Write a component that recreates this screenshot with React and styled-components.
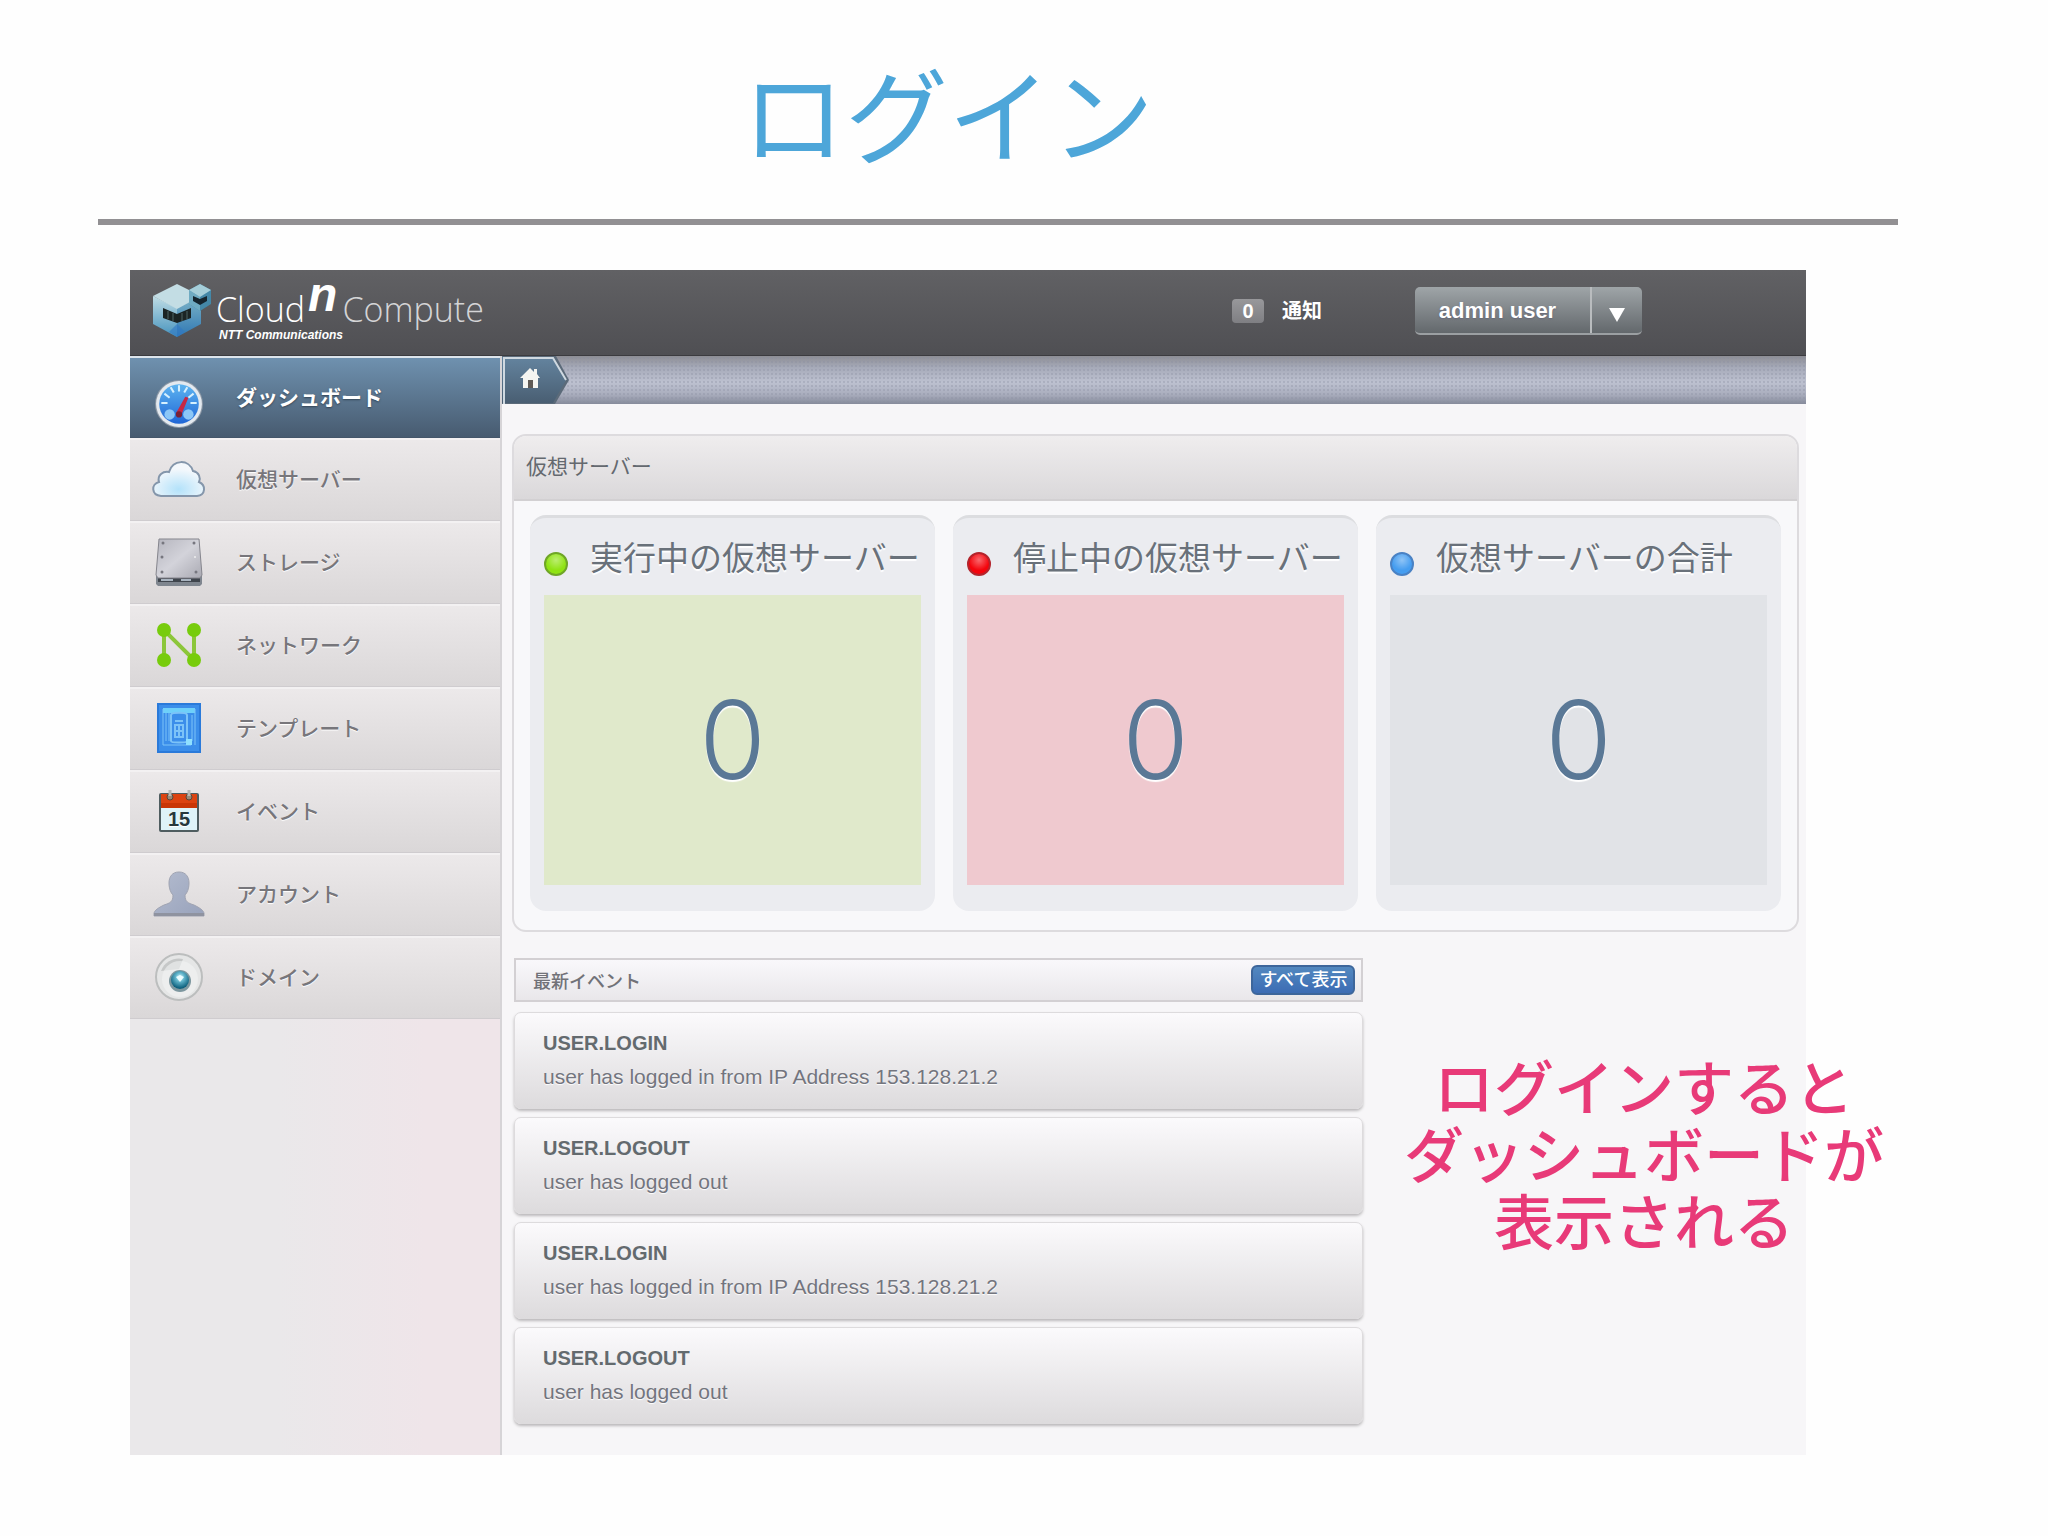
import React from "react";
import styled, { createGlobalStyle, css } from "styled-components";

const sans = `"Liberation Sans", "Noto Sans CJK JP", sans-serif`;
const jp = `"Noto Sans CJK JP", sans-serif`;

const DashboardIcon = () => (
  <svg viewBox="0 0 48 48" width="50" height="50">
    <defs>
      <linearGradient id="dial" x1="0" y1="0" x2="0" y2="1">
        <stop offset="0" stopColor="#5db4f0" />
        <stop offset="1" stopColor="#1f66d6" />
      </linearGradient>
    </defs>
    <circle cx="24" cy="24" r="23" fill="#8b97a5" />
    <circle cx="24" cy="24" r="22" fill="#e3e9ef" />
    <circle cx="24" cy="24" r="19" fill="url(#dial)" />
    <g stroke="#d5f0ff" strokeWidth="2">
      <path d="M7 23h6M10 14l5 4M16 8l3 5M24 6v6M32 8l-3 5M38 14l-5 4M41 23h-6" />
    </g>
    <circle cx="15" cy="34" r="5" fill="#8cc7f7" />
    <circle cx="33" cy="34" r="5" fill="#8cc7f7" />
    <path d="M30 17l3 1-7 17-5-2z" fill="#c72846" />
    <circle cx="24" cy="34" r="3" fill="#7a2034" />
  </svg>
);

const CloudIcon = () => (
  <svg viewBox="0 0 54 38" width="54" height="38">
    <defs>
      <radialGradient id="cloud" cx=".5" cy=".8" r=".6">
        <stop offset="0" stopColor="#b3e2fa" />
        <stop offset="1" stopColor="#f4f8fc" />
      </radialGradient>
    </defs>
    <path
      d="M9 36C-1 35-1 24 7 22C5 15 11 11 17 12C21-1 37-1 41 11C47 12 49 18 47 22C54 25 54 35 45 36Z"
      fill="url(#cloud)"
      stroke="#8496ab"
      strokeWidth="2"
    />
  </svg>
);

const StorageIcon = () => (
  <svg viewBox="0 0 48 50" width="48" height="50">
    <defs>
      <linearGradient id="disk" x1="0" y1="0" x2="1" y2="1">
        <stop offset="0" stopColor="#b5b5be" />
        <stop offset=".5" stopColor="#d3d3da" />
        <stop offset="1" stopColor="#a9a9b2" />
      </linearGradient>
    </defs>
    <path d="M1 39h46v8l-2 2H3l-2-2z" fill="#7f868f" />
    <path d="M3 40h42v5H3z" fill="#3f454d" />
    <path d="M6 43h12M26 43h10" stroke="#a9b4c0" strokeWidth="2" />
    <path d="M4 2h40l3 36-2 3H3l-2-3z" fill="url(#disk)" stroke="#85858d" />
    <g fill="#77777f">
      <circle cx="8" cy="6" r="1.5" />
      <circle cx="39" cy="6" r="1.5" />
      <circle cx="7" cy="20" r="1.5" />
      <circle cx="7" cy="35" r="1.5" />
      <circle cx="41" cy="35" r="1.5" />
    </g>
    <circle cx="40" cy="20" r="1" fill="#eee" />
  </svg>
);

const NetworkIcon = () => (
  <svg viewBox="0 0 46 46" width="46" height="46">
    <path
      d="M8 38V8L38 38V8"
      fill="none"
      stroke="#8cc63a"
      strokeWidth="4"
    />
    <g fill="#77cc0c">
      <circle cx="8" cy="8" r="7" />
      <circle cx="38" cy="8" r="7" />
      <circle cx="8" cy="38" r="7" />
      <circle cx="38" cy="38" r="7" />
    </g>
  </svg>
);

const TemplateIcon = () => (
  <svg viewBox="0 0 44 50" width="44" height="50">
    <path d="M1 1h42v48H1z" fill="#3b8eea" stroke="#2a7ada" strokeWidth="2" />
    <path d="M6 5h32v5H6z" fill="#6ed0fa" />
    <g fill="none" stroke="#7cc3f8">
      <path d="M6 6v36h28M38 6v36M9 10v28M12 10v28M35 12v26" />
      <path d="M14 12c0-3 16-3 16 0v26c0 2-16 2-16 0z" strokeWidth="2" />
      <path d="M18 18h8M18 22h8v12h-8zM22 22v12M18 28h8" strokeWidth="2" />
    </g>
    <path d="M29 36h6v6h-6z" fill="#8fe0ff" />
  </svg>
);

const EventIcon = () => (
  <svg viewBox="0 0 42 44" width="42" height="44">
    <rect x="1" y="4" width="40" height="39" rx="2" fill="#4f5d60" />
    <path d="M3 5h36v15H3z" fill="#dc4310" />
    <path d="M3 19h36v22H3z" fill="#dff3f8" />
    <path d="M3 14h36v5H3z" fill="#c93606" />
    <g fill="#9b8a78" stroke="#57473a">
      <circle cx="12" cy="8" r="3" />
      <circle cx="31" cy="8" r="3" />
    </g>
    <path d="M12 1v6M31 1v6" stroke="#b9b9b4" strokeWidth="3" />
    <text
      x="21"
      y="37"
      textAnchor="middle"
      fontFamily="Liberation Sans, sans-serif"
      fontWeight="700"
      fontSize="20"
      fill="#27373c"
    >
      15
    </text>
  </svg>
);

const AccountIcon = () => (
  <svg viewBox="0 0 52 46" width="52" height="46">
    <defs>
      <linearGradient id="person" x1="0" y1="0" x2="1" y2="1">
        <stop offset="0" stopColor="#b4bccf" />
        <stop offset="1" stopColor="#98a2bb" />
      </linearGradient>
    </defs>
    <path
      d="M26 1c7 0 10 5 10 11s-2 10-4 12c0 7 3 8 9 10 6 3 9 5 10 8v3H1v-3c1-3 4-5 10-8 6-2 9-3 9-10-2-2-4-6-4-12S19 1 26 1z"
      fill="url(#person)"
      stroke="#a0a4b2"
    />
    <path d="M1 42h50v3H1z" fill="#8f93a0" />
  </svg>
);

const DomainIcon = () => (
  <svg viewBox="0 0 50 50" width="50" height="50">
    <defs>
      <radialGradient id="iris" cx=".5" cy=".35" r=".6">
        <stop offset="0" stopColor="#d8f6fc" />
        <stop offset=".4" stopColor="#62b5cb" />
        <stop offset="1" stopColor="#0d5f7c" />
      </radialGradient>
    </defs>
    <circle cx="25" cy="25" r="23" fill="#e5e6e6" stroke="#bcbebe" strokeWidth="2" />
    <path d="M7 19C11 8 22 5 29 7L25 17Z" fill="#c6c8c8" />
    <circle cx="26" cy="27" r="18" fill="#f2f3f3" opacity=".6" />
    <circle cx="26" cy="29" r="11" fill="#7d979f" />
    <circle cx="26" cy="28" r="9" fill="url(#iris)" />
    <path d="M22 25l4 5 4-5-4-2z" fill="#eafcff" />
  </svg>
);

const LogoIcon = () => (
  <svg viewBox="0 0 60 54" width="60" height="54">
    <defs>
      <linearGradient id="cubeL" x1="0" y1="0" x2="0" y2="1">
        <stop offset="0" stopColor="#c0dde5" />
        <stop offset="1" stopColor="#4693bd" />
      </linearGradient>
      <linearGradient id="cubeR" x1="0" y1="0" x2="0" y2="1">
        <stop offset="0" stopColor="#7fb5c8" />
        <stop offset="1" stopColor="#2f78b3" />
      </linearGradient>
    </defs>
    <path d="M1 12l24 12v29L1 40z" fill="url(#cubeL)" />
    <path d="M49 12L25 24v29l24-13z" fill="url(#cubeR)" />
    <path d="M25 0l24 12-24 13L1 12z" fill="#c3dde4" />
    <path d="M11 24l14 6 14-6v10l-14 5-14-5z" fill="#1b2424" />
    <path d="M16 27v8M21 29v8M30 29v8M35 27v8" stroke="#4e6464" />
    <path d="M25 40l8 8-8 5-8-5z" fill="#3178c4" opacity=".6" />
    <path d="M48 0l11 6v14l-11 7-11-7V6z" fill="#4488a8" />
    <path d="M48 13v14l-11-7V6z" fill="#6fabc2" />
    <path d="M48 0l11 6-11 7-11-7z" fill="#a5ced9" />
    <path d="M41 12l7 3 7-3v5l-7 4-7-4z" fill="#15252e" />
  </svg>
);

const HomeCrumb = () => (
  <svg viewBox="0 0 68 48" width="68" height="48">
    <defs>
      <linearGradient id="crumb" x1="0" y1="0" x2="0" y2="1">
        <stop offset="0" stopColor="#64849f" />
        <stop offset="1" stopColor="#495e72" />
      </linearGradient>
    </defs>
    <path d="M0 0h54l13 24-14 24H0z" fill="#5b6a79" />
    <path d="M0 1h50l14 23-13 23H0z" fill="url(#crumb)" />
    <path d="M2 48V2h49l13 22" fill="none" stroke="#cfd9e1" strokeWidth="2" />
    <path
      d="M28 12l4 4v-3h3v5l3 4h-2v10h-5v-8h-5v8h-5V22h-3z"
      fill="#f5f5f1"
    />
    <path d="M26 24h5v8h-5z" fill="#5f5a55" />
  </svg>
);

const navItems = [
  { label: "ダッシュボード", Icon: DashboardIcon, active: true },
  { label: "仮想サーバー", Icon: CloudIcon },
  { label: "ストレージ", Icon: StorageIcon },
  { label: "ネットワーク", Icon: NetworkIcon },
  { label: "テンプレート", Icon: TemplateIcon },
  { label: "イベント", Icon: EventIcon },
  { label: "アカウント", Icon: AccountIcon },
  { label: "ドメイン", Icon: DomainIcon },
];

const servers = [
  { title: "実行中の仮想サーバー", dot: "#8fe312", ring: "#6fa626", fill: "#e0e9cb" },
  { title: "停止中の仮想サーバー", dot: "#f4040c", ring: "#b3242c", fill: "#efc9cf" },
  { title: "仮想サーバーの合計", dot: "#459df0", ring: "#4a82c4", fill: "#e1e3e7" },
];

const events = [
  { type: "USER.LOGIN", text: "user has logged in from IP Address 153.128.21.2" },
  { type: "USER.LOGOUT", text: "user has logged out" },
  { type: "USER.LOGIN", text: "user has logged in from IP Address 153.128.21.2" },
  { type: "USER.LOGOUT", text: "user has logged out" },
];

const App = () => {
  return (
    <Slide>
      <Global />
      <Title>ログイン</Title>
      <Rule />
      <Console>
        <Header>
          <Logo>
            <LogoIcon />
            <Brand>
              <Words>
                <span>Cloud</span>
                <sup>n</sup>
                <span className="product">Compute</span>
              </Words>
              <small>NTT Communications</small>
            </Brand>
          </Logo>
          <Notice>
            <span className="count">0</span>
            通知
          </Notice>
          <UserMenu>
            <button type="button">admin user</button>
            <button type="button" className="arrow" aria-label="admin user">
              <svg viewBox="0 0 16 14" width="16" height="14">
                <path d="M0 0h16L8 14z" fill="#fff" />
              </svg>
            </button>
          </UserMenu>
        </Header>
        <Body>
          <Sidebar>
            {navItems.map(({ label, Icon, active }) => (
              <NavItem href="#" key={label} $active={active}>
                <span className="icon">
                  <Icon />
                </span>
                {label}
              </NavItem>
            ))}
          </Sidebar>
          <Main>
            <Breadcrumb>
              <a href="#" aria-label="ダッシュボード">
                <HomeCrumb />
              </a>
            </Breadcrumb>
            <Content>
              <Panel>
                <h2>仮想サーバー</h2>
                <Cards>
                  {servers.map((s) => (
                    <ServerCard key={s.title} $fill={s.fill}>
                      <h3>
                        <Dot $color={s.dot} $ring={s.ring} />
                        {s.title}
                      </h3>
                      <p>0</p>
                    </ServerCard>
                  ))}
                </Cards>
              </Panel>
              <Events>
                <EventsHead>
                  <h2>最新イベント</h2>
                  <button type="button">すべて表示</button>
                </EventsHead>
                {events.map((e, i) => (
                  <EventCard key={i}>
                    <h4>{e.type}</h4>
                    <p>{e.text}</p>
                  </EventCard>
                ))}
              </Events>
            </Content>
          </Main>
        </Body>
        <Note>
          ログインすると
          <br />
          ダッシュボードが
          <br />
          表示される
        </Note>
      </Console>
    </Slide>
  );
};

const Global = createGlobalStyle`
  * {
    box-sizing: border-box;
  }
  body {
    margin: 0;
    background: #fefefe;
    font-family: ${sans};
  }
  h1, h2, h3, h4, p {
    margin: 0;
    font-weight: 400;
  }
  svg {
    display: block;
  }
  button {
    font-family: inherit;
    cursor: pointer;
  }
`;

const Slide = styled.div`
  padding: 56px 150px 80px 98px;
`;

const Title = styled.h1`
  padding-right: 100px;
  font-family: ${jp};
  font-size: 103px;
  line-height: 112px;
  text-align: center;
  color: #4da6d9;
`;

const Rule = styled.hr`
  height: 6px;
  margin: 51px 0 45px;
  border: none;
  background: #929093;
`;

const Console = styled.div`
  position: relative;
  margin: 0 92px 0 32px;
  background: #f7f6f8;
`;

const Header = styled.header`
  display: flex;
  align-items: center;
  height: 86px;
  padding: 0 164px 4px 22px;
  border-bottom: 1px solid #3b3b3f;
  background: linear-gradient(#616164, #4f4f53);
`;

const Logo = styled.div`
  display: flex;
  align-items: center;
  gap: 4px;
  margin-right: auto;
`;

const Brand = styled.div`
  display: flex;
  flex-direction: column;
  color: #fff;
  & small {
    padding-left: 3px;
    font-size: 12px;
    line-height: 12px;
    font-weight: 700;
    font-style: italic;
  }
`;

const Words = styled.div`
  display: flex;
  align-items: flex-end;
  height: 48px;
  font-family: "Open Sans", sans-serif;
  font-size: 34px;
  line-height: 40px;
  font-weight: 300;
  & sup {
    align-self: flex-start;
    margin: 0 5px 0 3px;
    font-family: ${sans};
    font-size: 48px;
    line-height: 28px;
    font-weight: 700;
    font-style: italic;
  }
  & .product {
    color: #d4d4d6;
  }
`;

const Notice = styled.div`
  display: flex;
  align-items: center;
  gap: 18px;
  margin-right: 93px;
  font-size: 20px;
  line-height: 24px;
  font-weight: 700;
  color: #fff;
  & .count {
    width: 32px;
    border-radius: 4px;
    background: linear-gradient(#98989b, #7f7f83);
    text-align: center;
  }
`;

const UserMenu = styled.div`
  display: flex;
  height: 48px;
  border-bottom: 2px solid #9b9fa2;
  border-radius: 5px;
  background: linear-gradient(#9fa5a8, #63686c);
  & button {
    width: 175px;
    padding: 2px 10px 0 0;
    border: none;
    background: none;
    color: #fff;
    font-size: 22px;
    font-weight: 700;
    text-shadow: 0 1px 2px #667;
  }
  & .arrow {
    display: flex;
    align-items: center;
    justify-content: center;
    width: 52px;
    padding: 10px 0 0;
    border-left: 2px solid #b9bcbe;
  }
`;

const Body = styled.div`
  display: flex;
`;

const Sidebar = styled.nav`
  flex: 0 0 372px;
  border-right: 2px solid #d6d4d7;
  background: linear-gradient(90deg, #eae8ea 40%, #efe5e9 80%);
`;

const NavItem = styled.a`
  display: flex;
  align-items: center;
  height: 83px;
  padding-bottom: 4px;
  border-top: 2px solid #f3f1f2;
  border-bottom: 1px solid #cfcccf;
  background: linear-gradient(#ece9ea, #dad7d8);
  color: #77767b;
  font-family: ${jp};
  font-size: 21px;
  font-weight: 500;
  text-decoration: none;
  text-shadow: 0 1px 1px #fff;
  & .icon {
    display: flex;
    justify-content: center;
    width: 98px;
    padding-top: 2px;
    margin-right: 8px;
  }
  ${({ $active }) =>
    $active &&
    css`
      height: 82px;
      border-top-color: #dde5ec;
      border-bottom-color: #44566a;
      background: linear-gradient(#6f91af, #475b70);
      color: #fff;
      font-weight: 700;
      text-shadow: 0 1px 2px #345;
      & .icon {
        padding-top: 16px;
      }
    `}
`;

const Main = styled.main`
  flex: 1;
  min-width: 0;
`;

const Breadcrumb = styled.nav`
  height: 48px;
  background: radial-gradient(#8a8fa055 1px, transparent 1px) 0 0 / 4px 4px,
    linear-gradient(#8d8d94, #a7abba 25%, #bdc1d0 55%, #a9adbd 80%, #868b9b);
  & a {
    display: inline-block;
  }
`;

const Content = styled.div`
  padding: 30px 7px 31px 10px;
`;

const Panel = styled.section`
  overflow: hidden;
  border: 2px solid #dddbde;
  border-radius: 14px;
  background: #f8f8fa;
  & h2 {
    padding: 0 12px 4px;
    border-bottom: 2px solid #d2d0d2;
    background: linear-gradient(#efedee, #dad8da);
    font-family: ${jp};
    font-size: 21px;
    line-height: 59px;
    color: #64696f;
  }
`;

const Cards = styled.div`
  display: grid;
  grid-template-columns: repeat(3, 1fr);
  gap: 18px;
  padding: 14px 16px 19px;
`;

const ServerCard = styled.article`
  padding: 10px 14px 26px;
  border-top: 3px solid #dcdde0;
  border-radius: 16px;
  background: #ebecf0;
  & h3 {
    display: flex;
    align-items: center;
    gap: 22px;
    font-family: ${jp};
    font-size: 33px;
    line-height: 56px;
    white-space: nowrap;
    color: #69717a;
    text-shadow: 0 2px 1px #fff;
  }
  & p {
    margin-top: 11px;
    background: ${({ $fill }) => $fill};
    font-family: Inter, sans-serif;
    font-size: 108px;
    line-height: 290px;
    font-weight: 300;
    text-align: center;
    color: #5a7896;
    text-shadow: 0 2px 1px #fff;
  }
`;

const Dot = styled.span`
  width: 24px;
  height: 24px;
  margin-top: 15px;
  border: 2px solid ${({ $ring }) => $ring};
  border-radius: 50%;
  background: radial-gradient(circle at 50% 30%, #ffffff66, transparent 60%),
    ${({ $color }) => $color};
`;

const Events = styled.section`
  display: flex;
  flex-direction: column;
  gap: 8px;
  width: 66%;
  margin: 26px 0 0 2px;
`;

const EventsHead = styled.div`
  display: flex;
  align-items: center;
  justify-content: space-between;
  height: 44px;
  margin-bottom: 2px;
  padding: 0 6px 0 17px;
  border: 2px solid #d3d0d3;
  background: linear-gradient(#f9f8fb, #e9e7ea);
  & h2 {
    font-family: ${jp};
    font-size: 18px;
    font-weight: 500;
    color: #717278;
  }
  & button {
    height: 30px;
    padding: 0 6px 4px;
    border: 2px solid #3d669b;
    border-radius: 6px;
    background: linear-gradient(#5288bf, #3c6cb4);
    color: #fff;
    font-family: ${jp};
    font-size: 18px;
    line-height: 22px;
    font-weight: 500;
  }
`;

const EventCard = styled.article`
  height: 97px;
  padding: 16px 28px;
  border: 1px solid #dddbdd;
  border-radius: 7px;
  background: linear-gradient(#fbfafc, #dddbdd);
  box-shadow: 0 2px 3px #bbb9bb;
  & h4 {
    font-size: 20px;
    line-height: 28px;
    font-weight: 700;
    color: #636a6e;
  }
  & p {
    margin-top: 4px;
    font-size: 21px;
    line-height: 32px;
    color: #73757e;
    text-shadow: 0 1px 1px #fff;
  }
`;

const Note = styled.p`
  position: absolute;
  right: -78px;
  bottom: 203px;
  font-family: ${jp};
  font-size: 60px;
  line-height: 67px;
  font-weight: 500;
  text-align: center;
  white-space: nowrap;
  color: #e83a78;
`;

export default App;
